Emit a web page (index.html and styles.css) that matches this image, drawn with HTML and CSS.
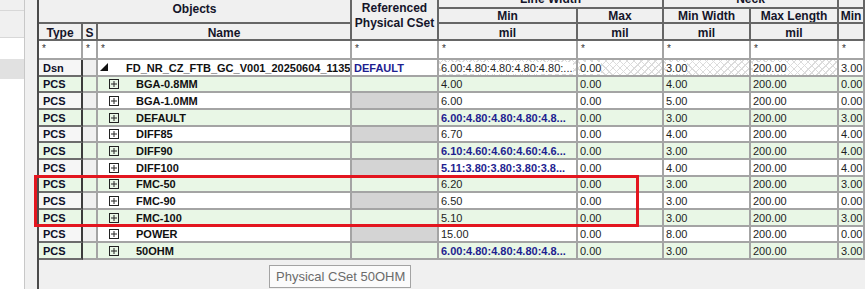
FILE: index.html
```html
<!DOCTYPE html>
<html>
<head>
<meta charset="utf-8">
<link rel="stylesheet" href="styles.css">
</head>
<body>
<div class="app">
  <div class="tree">
    <div class="t1"></div>
    <div class="t2"></div>
    <div class="t3"></div>
    <div class="t4"></div>
  </div>
  <div class="strip"></div>
  <div class="pane">
    <div class="grid">
      <!-- header row 1/2 -->
      <div class="c h obj">Objects</div>
      <div class="c h ref">Referenced<br>Physical CSet</div>
      <div class="c h grp">Line Width</div>
      <div class="c h grp">Neck</div>
      <div class="c h"></div>
      <div class="c h">Min</div>
      <div class="c h">Max</div>
      <div class="c h">Min Width</div>
      <div class="c h">Max Length</div>
      <div class="c h">Min</div>
      <!-- header row 3 -->
      <div class="c h u">Type</div>
      <div class="c h u">S</div>
      <div class="c h u">Name</div>
      <div class="c h u">mil</div>
      <div class="c h u">mil</div>
      <div class="c h u">mil</div>
      <div class="c h u">mil</div>
      <div class="c h u"></div>
      <!-- filter row -->
      <div class="c f">*</div>
      <div class="c f">*</div>
      <div class="c f">*</div>
      <div class="c f">*</div>
      <div class="c f">*</div>
      <div class="c f">*</div>
      <div class="c f">*</div>
      <div class="c f">*</div>
      <div class="c f">*</div>

      <div class="row">
        <div class="c ty">Dsn</div><div class="c s"></div>
        <div class="c nm dsn"><svg class="tri" width="8" height="8" viewBox="0 0 8 8"><polygon points="8,0 8,8 0,8" fill="#111"/></svg><span>FD_NR_CZ_FTB_GC_V001_20250604_1135</span></div>
        <div class="c bl">DEFAULT</div>
        <div class="c hx"><span>6.00:4.80:4.80:4.80:4.80:...</span></div>
        <div class="c hx"><span>0.00</span></div>
        <div class="c hx"><span>3.00</span></div>
        <div class="c hx"><span>200.00</span></div>
        <div class="c">3.00</div>
      </div>
      <div class="row g">
        <div class="c ty">PCS</div><div class="c s"></div>
        <div class="c nm"><svg class="ex" width="10" height="10" viewBox="0 0 10 10"><rect x="0.5" y="0.5" width="9" height="9" fill="none" stroke="#222"/><path d="M2 5H8M5 2V8" stroke="#222" fill="none"/></svg>BGA-0.8MM</div>
        <div class="c rf"></div>
        <div class="c">4.00</div><div class="c">0.00</div><div class="c">4.00</div><div class="c">200.00</div><div class="c">0.00</div>
      </div>
      <div class="row">
        <div class="c ty">PCS</div><div class="c s"></div>
        <div class="c nm"><svg class="ex" width="10" height="10" viewBox="0 0 10 10"><rect x="0.5" y="0.5" width="9" height="9" fill="none" stroke="#222"/><path d="M2 5H8M5 2V8" stroke="#222" fill="none"/></svg>BGA-1.0MM</div>
        <div class="c rf"></div>
        <div class="c">6.00</div><div class="c">0.00</div><div class="c">5.00</div><div class="c">200.00</div><div class="c">0.00</div>
      </div>
      <div class="row g">
        <div class="c ty">PCS</div><div class="c s"></div>
        <div class="c nm"><svg class="ex" width="10" height="10" viewBox="0 0 10 10"><rect x="0.5" y="0.5" width="9" height="9" fill="none" stroke="#222"/><path d="M2 5H8M5 2V8" stroke="#222" fill="none"/></svg>DEFAULT</div>
        <div class="c rf"></div>
        <div class="c bl">6.00:4.80:4.80:4.80:4.8...</div><div class="c">0.00</div><div class="c">3.00</div><div class="c">200.00</div><div class="c">3.00</div>
      </div>
      <div class="row">
        <div class="c ty">PCS</div><div class="c s"></div>
        <div class="c nm"><svg class="ex" width="10" height="10" viewBox="0 0 10 10"><rect x="0.5" y="0.5" width="9" height="9" fill="none" stroke="#222"/><path d="M2 5H8M5 2V8" stroke="#222" fill="none"/></svg>DIFF85</div>
        <div class="c rf"></div>
        <div class="c">6.70</div><div class="c">0.00</div><div class="c">4.00</div><div class="c">200.00</div><div class="c">4.00</div>
      </div>
      <div class="row g">
        <div class="c ty">PCS</div><div class="c s"></div>
        <div class="c nm"><svg class="ex" width="10" height="10" viewBox="0 0 10 10"><rect x="0.5" y="0.5" width="9" height="9" fill="none" stroke="#222"/><path d="M2 5H8M5 2V8" stroke="#222" fill="none"/></svg>DIFF90</div>
        <div class="c rf"></div>
        <div class="c bl">6.10:4.60:4.60:4.60:4.6...</div><div class="c">0.00</div><div class="c">3.00</div><div class="c">200.00</div><div class="c">4.00</div>
      </div>
      <div class="row">
        <div class="c ty">PCS</div><div class="c s"></div>
        <div class="c nm"><svg class="ex" width="10" height="10" viewBox="0 0 10 10"><rect x="0.5" y="0.5" width="9" height="9" fill="none" stroke="#222"/><path d="M2 5H8M5 2V8" stroke="#222" fill="none"/></svg>DIFF100</div>
        <div class="c rf"></div>
        <div class="c bl">5.11:3.80:3.80:3.80:3.8...</div><div class="c">0.00</div><div class="c">4.00</div><div class="c">200.00</div><div class="c">4.00</div>
      </div>
      <div class="row g">
        <div class="c ty">PCS</div><div class="c s"></div>
        <div class="c nm"><svg class="ex" width="10" height="10" viewBox="0 0 10 10"><rect x="0.5" y="0.5" width="9" height="9" fill="none" stroke="#222"/><path d="M2 5H8M5 2V8" stroke="#222" fill="none"/></svg>FMC-50</div>
        <div class="c rf"></div>
        <div class="c">6.20</div><div class="c">0.00</div><div class="c">3.00</div><div class="c">200.00</div><div class="c">3.00</div>
      </div>
      <div class="row">
        <div class="c ty">PCS</div><div class="c s"></div>
        <div class="c nm"><svg class="ex" width="10" height="10" viewBox="0 0 10 10"><rect x="0.5" y="0.5" width="9" height="9" fill="none" stroke="#222"/><path d="M2 5H8M5 2V8" stroke="#222" fill="none"/></svg>FMC-90</div>
        <div class="c rf"></div>
        <div class="c">6.50</div><div class="c">0.00</div><div class="c">3.00</div><div class="c">200.00</div><div class="c">0.00</div>
      </div>
      <div class="row g">
        <div class="c ty">PCS</div><div class="c s"></div>
        <div class="c nm"><svg class="ex" width="10" height="10" viewBox="0 0 10 10"><rect x="0.5" y="0.5" width="9" height="9" fill="none" stroke="#222"/><path d="M2 5H8M5 2V8" stroke="#222" fill="none"/></svg>FMC-100</div>
        <div class="c rf"></div>
        <div class="c">5.10</div><div class="c">0.00</div><div class="c">3.00</div><div class="c">200.00</div><div class="c">3.00</div>
      </div>
      <div class="row">
        <div class="c ty">PCS</div><div class="c s"></div>
        <div class="c nm"><svg class="ex" width="10" height="10" viewBox="0 0 10 10"><rect x="0.5" y="0.5" width="9" height="9" fill="none" stroke="#222"/><path d="M2 5H8M5 2V8" stroke="#222" fill="none"/></svg>POWER</div>
        <div class="c rf"></div>
        <div class="c">15.00</div><div class="c">0.00</div><div class="c">8.00</div><div class="c">200.00</div><div class="c">0.00</div>
      </div>
      <div class="row g">
        <div class="c ty">PCS</div><div class="c s"></div>
        <div class="c nm"><svg class="ex" width="10" height="10" viewBox="0 0 10 10"><rect x="0.5" y="0.5" width="9" height="9" fill="none" stroke="#222"/><path d="M2 5H8M5 2V8" stroke="#222" fill="none"/></svg>50OHM</div>
        <div class="c rf"></div>
        <div class="c bl">6.00:4.80:4.80:4.80:4.8...</div><div class="c">0.00</div><div class="c">3.00</div><div class="c">200.00</div><div class="c">3.00</div>
      </div>
    </div>
  </div>
  <div class="redbox"></div>
  <div class="tip">Physical CSet 50OHM</div>
</div>
</body>
</html>
```

FILE: styles.css
```css
* { box-sizing: border-box; }

body {
  margin: 0;
  width: 865px;
  height: 289px;
  overflow: hidden;
  background: #ffffff;
  font-family: "Liberation Sans", Arial, sans-serif;
}

.app {
  position: relative;
  display: flex;
  height: 289px;
}

.tree {
  width: 25px;
  flex: none;
  display: flex;
  flex-direction: column;
  background: #ffffff;
  border-right: 1px solid #c8c8c8;
}
.t1 { height: 11px; background: #f0f0f0; border-bottom: 1px solid #d8d8d8; }
.t2 { height: 27px; background: #f0f0f0; border-bottom: 1px solid #d8d8d8; }
.t3 { height: 21px; background: #ffffff; }
.t4 { height: 20px; background: #e1e1e1; }

.strip {
  width: 12px;
  flex: none;
  background: #f0f0f0;
}

.pane {
  flex: 1;
  min-width: 0;
  overflow: hidden;
  background: #f0f0f0;
  border-left: 2px solid #4a4a4a;
}

.grid {
  display: grid;
  grid-template-columns: 44px 15px 254px 87px 139px 86px 87px 88px 26px;
  grid-template-rows: 19px 15px 17px 19px repeat(12, 16.667px);
  margin-top: -10px;
}

.row { display: contents; }

.c {
  display: flex;
  align-items: center;
  padding: 1px 0 0 2px;
  border-right: 2px solid #a4a4a4;
  border-bottom: 2px solid #a4a4a4;
  background: #ffffff;
  color: #1e1e1e;
  font-size: 11px;
  white-space: nowrap;
  overflow: hidden;
}

.row.g .c { background: #e9f7e6; }

/* headers */
.h {
  background: #f0f0f0;
  border-color: #666666;
  justify-content: center;
  padding: 0;
  font-size: 12px;
  font-weight: bold;
  color: #15152a;
}
.h.u { padding-top: 2px; }
.obj { grid-column: span 3; grid-row: span 2; padding-top: 6px; }
.ref {
  grid-row: span 3;
  text-align: center;
  line-height: 15px;
  padding-top: 2px;
}
.grp { grid-column: span 2; }

/* filter row */
.f {
  align-items: flex-start;
  padding: 2px 0 0 3px;
  background: #ffffff;
  font-size: 10px;
  line-height: 12px;
  color: #333;
}

/* data columns */
.row .ty {
  background: #f6f6f6;
  border-right-color: #3c3c3c;
  border-bottom-color: #6c6c6c;
  padding-left: 4px;
  font-weight: bold;
  color: #0f1028;
}
.row .s { background: #f0f0f0; }
.row .rf { background: #d4d4d4; }

.nm {
  font-weight: bold;
  color: #111;
  padding-left: 11px;
}
.nm .ex { flex: none; margin-right: 17px; }
.nm.dsn { padding-left: 2px; }
.nm .tri { flex: none; margin-right: 18px; margin-top: -2px; }

.bl { color: #1e1e90; font-weight: bold; }

.hx {
  background-color: #ffffff;
  background-image:
    repeating-linear-gradient(45deg, transparent 0 4px, #dcdcdc 4px 5px),
    repeating-linear-gradient(-45deg, transparent 0 4px, #dcdcdc 4px 5px);
}
.hx span { background: #ffffff; }

/* overlays */
.redbox {
  position: absolute;
  left: 34px;
  top: 175px;
  width: 605px;
  height: 52px;
  border: 3px solid #e3161f;
}

.tip {
  position: absolute;
  left: 269px;
  top: 265px;
  width: 142px;
  height: 23px;
  background: #fbfbfb;
  border: 1px solid #a3a3a3;
  padding-left: 6px;
  font-size: 13px;
  line-height: 21px;
  color: #6b6b6b;
  white-space: nowrap;
}
```
